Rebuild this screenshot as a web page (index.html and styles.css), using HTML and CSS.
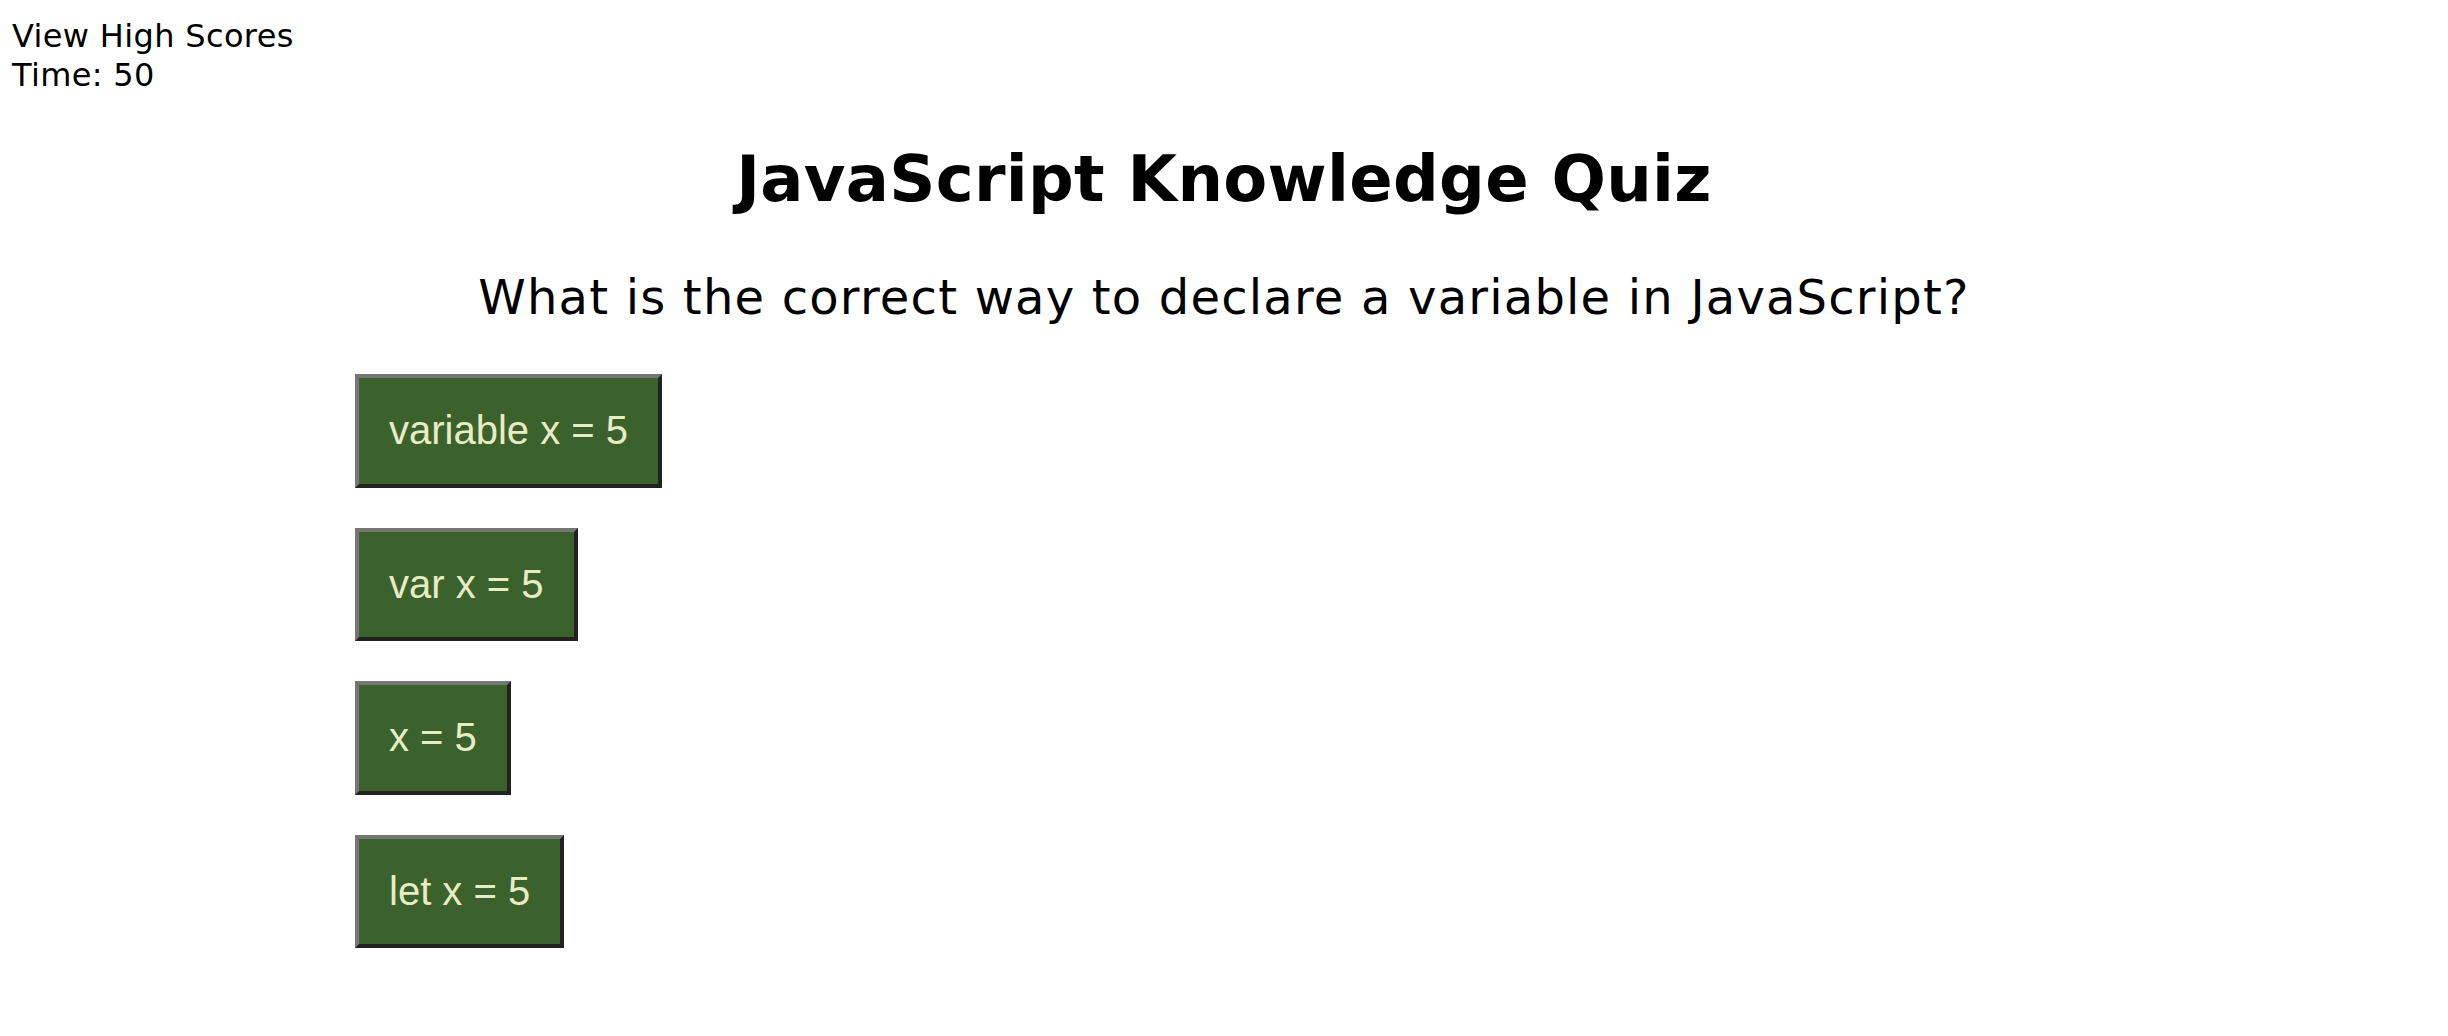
FILE: index.html
```html
<!DOCTYPE html>
<html lang="en">
<head>
<meta charset="utf-8">
<title>JavaScript Knowledge Quiz</title>
<link rel="stylesheet" href="styles.css">
</head>
<body>
  <header class="top-bar">
    <div class="high-scores">View High Scores</div>
    <div class="timer">Time: 50</div>
  </header>
  <main class="quiz">
    <h1 class="quiz-title">JavaScript Knowledge Quiz</h1>
    <h2 class="question">What is the correct way to declare a variable in JavaScript?</h2>
    <div class="choices">
      <button class="choice">variable x = 5</button>
      <button class="choice">var x = 5</button>
      <button class="choice">x = 5</button>
      <button class="choice">let x = 5</button>
    </div>
  </main>
</body>
</html>
```

FILE: styles.css
```css
html, body {
  margin: 0;
  padding: 0;
  background: #ffffff;
}

body {
  font-family: "DejaVu Sans", Verdana, sans-serif;
  color: #000000;
}

.top-bar {
  padding: 17px 12px 0 12px;
  font-size: 32px;
  line-height: 39px;
  letter-spacing: 0.35px;
}

.quiz {
  display: flex;
  flex-direction: column;
}

.quiz-title {
  margin: 45px 0 0 0;
  font-size: 64px;
  line-height: 78px;
  font-weight: bold;
  text-align: center;
  letter-spacing: 0.3px;
}

.question {
  margin: 50px 0 0 0;
  font-size: 48px;
  line-height: 58px;
  font-weight: normal;
  text-align: center;
  letter-spacing: 1.2px;
}

.choices {
  display: flex;
  flex-direction: column;
  align-items: flex-start;
  gap: 40.3px;
  margin-top: 48.3px;
  padding-left: 355px;
}

.choice {
  font-family: "Liberation Sans", Arial, sans-serif;
  font-size: 40px;
  line-height: 45.3px;
  padding: 30px;
  margin: 0;
  background: #3b622d;
  color: #e8ecc4;
  border-width: 4px;
  border-style: solid;
  border-color: #767676 #222222 #222222 #767676;
  cursor: pointer;
}
```
